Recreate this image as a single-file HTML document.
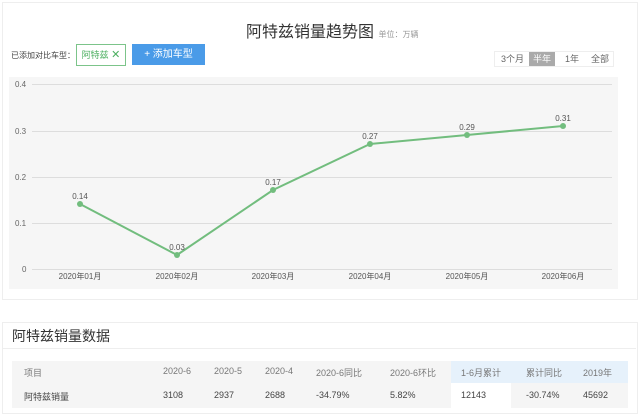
<!DOCTYPE html>
<html><head><meta charset="utf-8"><style>
body{margin:0;width:640px;height:408px;background:#fff;font-family:"Liberation Sans","Noto Sans CJK SC",sans-serif;position:relative;overflow:hidden;color:#333}
.a{position:absolute;white-space:nowrap}
</style></head><body>
<div class="a" style="left:2px;top:2px;width:634px;height:296px;border:1px solid #eee"></div>
<div class="a" style="left:246px;top:18px;font-size:16px;color:#333">阿特兹销量趋势图 <span style="font-size:8px;color:#999">单位：万辆</span></div>
<div class="a" style="left:11px;top:50px;font-size:8px;color:#444">已添加对比车型：</div>
<div class="a" style="left:76px;top:44px;width:48px;height:20px;border:1px solid #7cc48a;background:#fff;font-size:9px;color:#4caf60;line-height:20px;text-align:center">阿特兹 <span style="font-size:11px">✕</span></div>
<div class="a" style="left:132px;top:44px;width:73px;height:21px;background:#4a9be8;color:#fff;font-size:10px;line-height:21px;text-align:center">+ 添加车型</div>
<div class="a" style="left:494px;top:51px;width:118px;height:14px;border:1px solid #eee;font-size:9px;color:#666;line-height:14px">
<span class="a" style="left:6px">3个月</span><span class="a" style="left:34px;width:26px;background:#aaa;color:#fff;text-align:center">半年</span><span class="a" style="left:70px">1年</span><span class="a" style="left:96px">全部</span></div>
<div class="a" style="left:9px;top:77px;width:609px;height:212px;background:#f6f6f6"></div>
<svg class="a" style="left:0;top:0" width="640" height="300">
<g stroke="#ddd" stroke-width="1"><line x1="32" y1="84.5" x2="612" y2="84.5"/><line x1="32" y1="131.5" x2="612" y2="131.5"/><line x1="32" y1="177.5" x2="612" y2="177.5"/><line x1="32" y1="223.5" x2="612" y2="223.5"/><line x1="32" y1="269.5" x2="612" y2="269.5"/></g>
<g font-size="8" fill="#666" font-family="Liberation Sans,sans-serif"><text x="15" y="87">0.4</text><text x="15" y="134">0.3</text><text x="15" y="180">0.2</text><text x="15" y="226">0.1</text><text x="22" y="272">0</text></g>
<polyline points="80,204 177,255 273,190 370,144 467,135 563,126" fill="none" stroke="#72bd7e" stroke-width="2"/>
<g fill="#72bd7e"><circle cx="80" cy="204" r="3"/><circle cx="177" cy="255" r="3"/><circle cx="273" cy="190" r="3"/><circle cx="370" cy="144" r="3"/><circle cx="467" cy="135" r="3"/><circle cx="563" cy="126" r="3"/></g>
<g font-size="8" fill="#555" text-anchor="middle" font-family="Liberation Sans,sans-serif"><text x="80" y="199">0.14</text><text x="177" y="250">0.03</text><text x="273" y="185">0.17</text><text x="370" y="139">0.27</text><text x="467" y="130">0.29</text><text x="563" y="121">0.31</text></g>
<g font-size="8" fill="#555" text-anchor="middle" font-family="Liberation Sans,Noto Sans CJK SC,sans-serif"><text x="80" y="279">2020年01月</text><text x="177" y="279">2020年02月</text><text x="273" y="279">2020年03月</text><text x="370" y="279">2020年04月</text><text x="467" y="279">2020年05月</text><text x="563" y="279">2020年06月</text></g>
</svg>
<div class="a" style="left:2px;top:322px;width:634px;height:90px;border:1px solid #eee"></div>
<div class="a" style="left:2px;top:348px;width:634px;height:1px;background:#eee"></div>
<div class="a" style="left:12px;top:326px;font-size:14px;color:#333">阿特兹销量数据</div>
<div class="a" style="left:12px;top:361px;width:616px;height:47px;background:#f5f5f5"></div>
<div class="a" style="left:451px;top:361px;width:177px;height:22px;background:#e6f1fb"></div>
<div class="a" style="left:451px;top:383px;width:60px;height:25px;background:#fff"></div>
<div class="a" style="left:0;top:366px;font-size:9px;color:#777;width:640px">
<span class="a" style="left:24px">项目</span><span class="a" style="left:163px">2020-6</span><span class="a" style="left:214px">2020-5</span><span class="a" style="left:265px">2020-4</span><span class="a" style="left:316px">2020-6同比</span><span class="a" style="left:390px">2020-6环比</span><span class="a" style="left:461px">1-6月累计</span><span class="a" style="left:526px">累计同比</span><span class="a" style="left:583px">2019年</span></div>
<div class="a" style="left:0;top:390px;font-size:9px;color:#444;width:640px">
<span class="a" style="left:24px">阿特兹销量</span><span class="a" style="left:163px">3108</span><span class="a" style="left:214px">2937</span><span class="a" style="left:265px">2688</span><span class="a" style="left:316px">-34.79%</span><span class="a" style="left:390px">5.82%</span><span class="a" style="left:461px">12143</span><span class="a" style="left:526px">-30.74%</span><span class="a" style="left:583px">45692</span></div>
</body></html>
